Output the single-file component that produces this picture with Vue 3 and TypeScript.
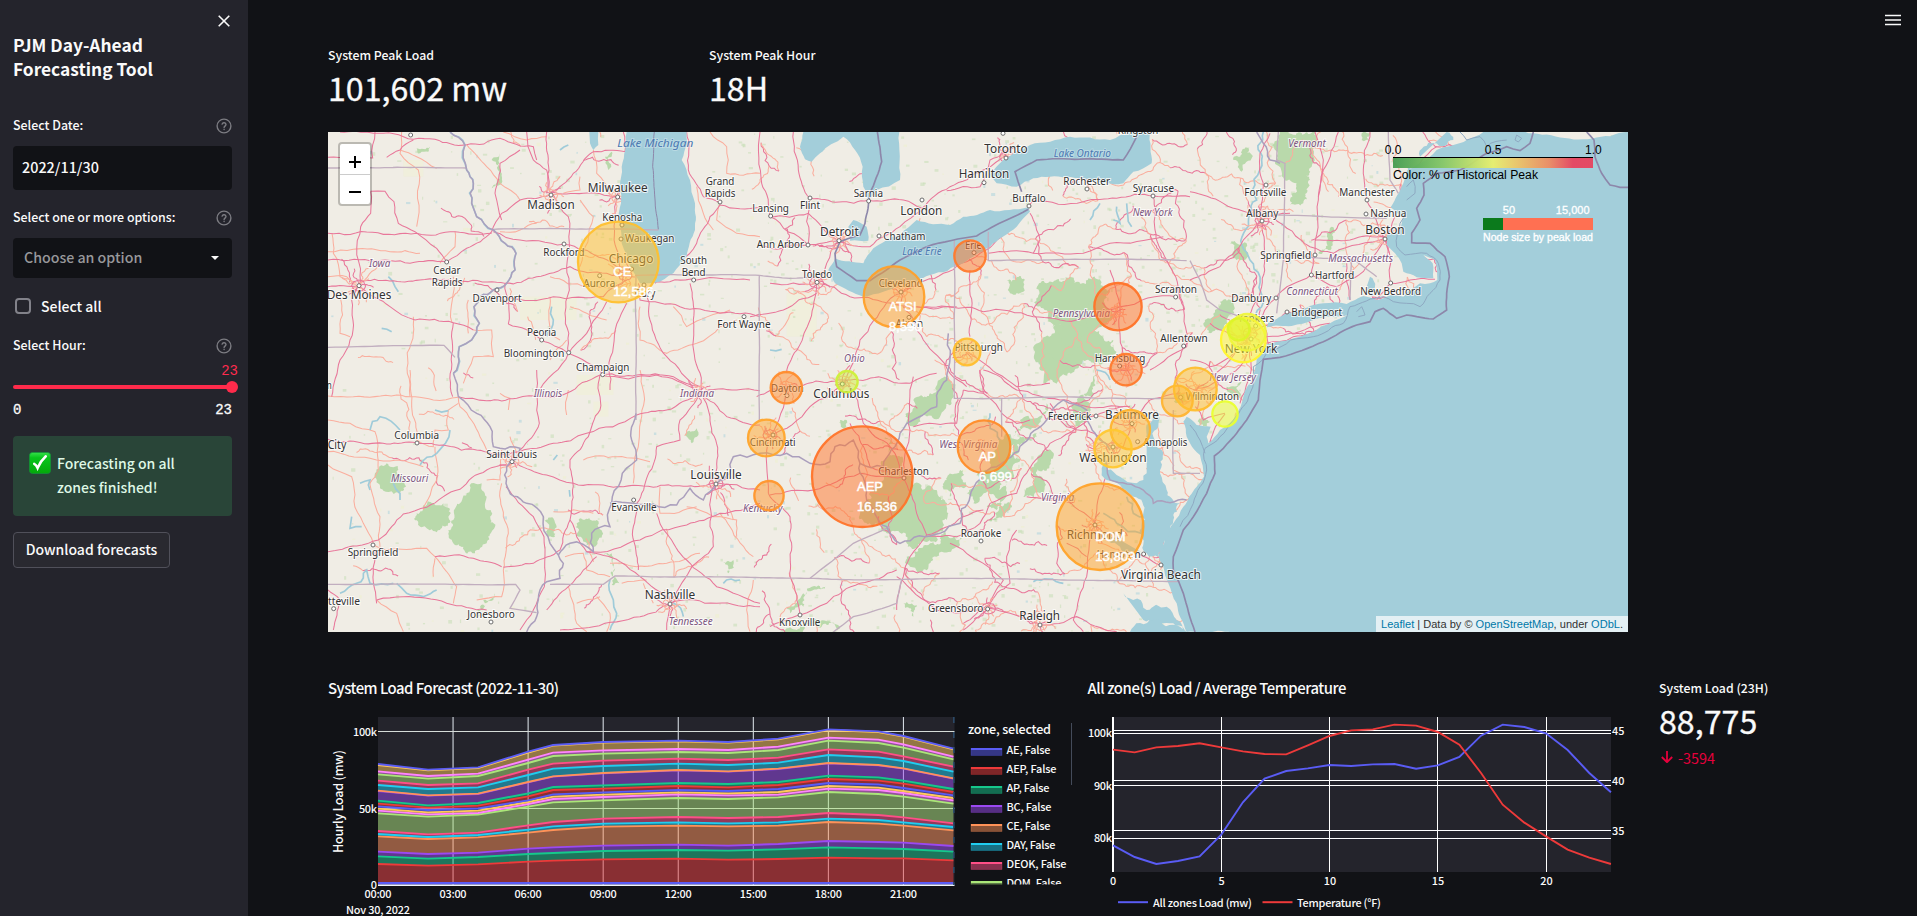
<script setup lang="ts">
type Pt = [number, number]
interface Label { t: string; x: number; y: number; w: number; k?: 'big' | 'state' | 'lake' }
interface Load { x: number; y: number; r: number; c: string; name?: string; value?: string; tx?: number; ty?: number }

const makeRandom = (seed: number) => () => {
  seed = (seed * 1664525 + 1013904223) % 4294967296
  return seed / 4294967296
}
const parse = (s: string, dx = 0, dy = 0): Pt[] =>
  s.trim().split(/\s+/).map((p) => {
    const [x, y] = p.split(',').map(Number)
    return [x + dx, y + dy] as Pt
  })

// Midpoint displacement gives hand-digitised lines a natural wander.
const rough = (pts: Pt[], amp: number, seed: number, min = 22): string => {
  const rnd = makeRandom(seed)
  const out: Pt[] = [pts[0]]
  const split = (a: Pt, b: Pt): void => {
    const d = Math.hypot(b[0] - a[0], b[1] - a[1])
    if (d > min) {
      const o = (rnd() - 0.5) * d * amp
      const m: Pt = [(a[0] + b[0]) / 2 - ((b[1] - a[1]) / d) * o, (a[1] + b[1]) / 2 + ((b[0] - a[0]) / d) * o]
      split(a, m)
      split(m, b)
    } else out.push(b)
  }
  for (let i = 1; i < pts.length; i++) split(pts[i - 1], pts[i])
  return 'M' + out.map((p) => `${p[0].toFixed(1)},${p[1].toFixed(1)}`).join(' ')
}
const lines = (list: string[], dx: number, dy: number, amp = 0.16) =>
  list.map((s, i) => rough(parse(s, dx, dy), amp, i * 97 + dx + dy + 5))

const motorways = [
  ...lines([
    '24,112 158,114 165,36', '60,36 160,40 280,58 345,58 440,74 540,55 640,80 650,120', '200,112 240,90 280,60',
    '152,214 152,280 122,320 122,490', '152,214 195,214 222,245 235,310 285,335',
    '24,340 290,340 405,335 515,340', '285,335 350,385 380,425', '24,420 150,422 270,430 380,425', '118,484 300,480 530,487 555,490 565,612',
    '118,495 95,540 90,660 60,720 35,830', '120,500 210,560 285,600 400,608 460,630', '400,608 398,830',
    '380,425 440,385 515,335 545,280 600,240 690,225', '690,222 680,150 640,120 620,36', '690,222 760,160 820,95 915,95 910,36',
    '690,215 790,220 890,232', '700,225 745,290 748,370 740,440 735,580 745,700', '890,232 885,290 895,400 930,450',
    '520,335 600,360 750,375 850,415 930,450', '555,490 650,470 750,440 860,460 930,470', '565,532 700,530 850,530 920,480',
    '565,612 665,660 745,700 850,762 950,765 1060,770 1140,800', '650,830 700,760 745,700 800,640 860,545',
    '955,490 960,540 1080,560 1200,580 1320,590', '870,810 880,680 920,550', '975,500 990,600 1040,710 1140,800',
    '1005,490 1080,430 1130,370 1170,290 1200,255 1320,262', '1110,490 1120,600 1125,720 1150,830', '1100,36 1105,150 1150,230 1200,248',
    '1000,486 1130,480 1290,480', '680,36 680,220', '24,500 118,497', '545,300 525,220 540,130 600,90',
  ], 0, 0),
  ...lines([
    '24,208 200,222 290,218 470,240 560,255 600,245', '24,545 110,528 175,510 215,470 250,432 320,412 420,358 500,300 560,285',
    '650,0 658,160 600,240', '600,245 700,220 800,190 950,135 1040,120 1140,65', '840,15 840,120 805,200 750,270 750,450',
    '590,280 680,315 760,340 880,352 1000,352 1180,340 1320,360', '558,350 640,440 672,500 673,650 640,720 600,780', '750,450 720,540 640,580 550,592',
    '750,450 800,545 900,575 960,620 1050,690', '800,545 960,510 1100,465 1200,430 1320,400', '1185,340 1170,470 1180,530 1110,600 1050,700 1040,780',
    '950,410 955,600', '1010,430 1040,490 1100,570 1190,650 1320,700', '1050,700 1190,700 1320,710', '1050,700 960,740 820,770 720,780', '345,560 460,565 545,590',
    '1140,65 1170,140 1190,330', '1140,65 1250,60 1320,62', '1140,65 1080,150 1080,210 1010,230 950,400', '1140,65 1220,140 1320,165', '24,660 60,690 40,780',
    '680,720 745,650 790,600 830,560', '165,540 160,610 170,700', '170,690 250,680 380,700 500,720', '415,80 500,92 590,85 740,70 840,15 1010,15 1130,60',
  ], 0, 750),
  ...lines([
    '30,36 35,190 60,290 175,375', '130,36 145,150 180,235 175,375', '180,235 355,240 460,240 516,265 600,200 700,150 770,100', '60,290 175,280 265,362',
    '24,375 175,375 265,362', '265,362 360,380 450,320 516,270', '265,362 230,430 200,490 180,600 110,760', '200,490 300,530 410,548 500,560 620,560',
    '410,548 470,510 580,460 690,400 760,345 835,265', '835,265 850,240 1000,245 1100,235 1210,228 1320,230', '590,212 690,200 720,120 800,80',
    '840,280 850,300 870,360 850,400', '715,400 850,400 1000,400 1080,370 1240,350', '460,560 520,660 600,760 650,800', '500,560 700,575 850,590 980,600 1110,560 1280,530',
    '660,450 660,650', '1210,228 1215,330 1250,420 1290,530', '1080,450 1110,560 1110,640 1128,749', '1290,530 1310,680 1200,750', '60,490 200,490',
    '650,690 740,760 800,800 900,790', '410,548 330,660 280,790', '0,590 100,570 200,520',
  ], 1290, 0),
  ...lines([
    '20,80 108,55 290,30 480,40 560,10', '290,30 180,110 60,200', '290,30 340,160 420,230 460,320', '108,55 60,200 55,370', '300,160 345,240 360,290 430,310',
    '60,375 190,360 330,310 460,320', '460,320 500,430 530,495 640,440 700,420', '460,320 480,180 490,20', '490,170 620,160 640,60', '640,60 700,70 800,160 840,150',
    '700,70 690,0', '530,495 480,560 460,620 440,720', '530,500 620,500 690,460 720,400 800,370 900,220 1020,140 1140,110', '600,520 700,580 760,630 715,715 640,780',
    '55,370 120,440 120,620 150,735', '150,735 230,700 330,640 440,600', '150,735 60,770', '440,620 560,720 715,715 780,730 870,765', '1141,179 1120,230 1089,236 1060,350 1035,465',
    '1035,465 1010,620 970,750 1000,785', '1035,465 1150,540 1230,585', '830,380 930,380 1040,465', '1141,150 1200,90 1290,70', '900,100 950,170 1010,180 1089,230',
    '800,480 770,560 780,640 640,760', '870,765 980,740 1100,785', '950,520 1010,560', '700,0 800,60 930,90 1120,110',
  ], 1290, 750),
  ...lines([
    '0,215 100,250 215,300 300,280', '215,300 215,500 175,600 180,660', '215,300 220,200 210,100 240,40', '215,300 160,360 90,440 0,480', '250,290 360,380 430,400 585,355',
    '375,36 400,120 385,240 375,405 363,465 257,535 180,640', '445,36 400,150 385,230', '585,355 530,240 520,150 540,36', '585,355 640,230 690,130 740,80',
    '585,355 600,410 602,490', '375,360 480,360 585,350', '363,465 440,500 540,430 585,360', '190,640 290,576 400,555 560,540 602,490', '602,490 660,480 735,478',
    '470,430 480,540', '228,650 300,640 420,610', '228,670 310,650 400,625', '175,660 120,720 60,780 16,807', '60,610 180,655', '16,807 90,780 150,740 180,670', '16,860 40,900 105,880',
    '0,720 60,740 175,665', '90,950 60,965 105,882', '180,690 175,780 150,850',
  ], 2610, 0),
]

const trunks = [
  ...lines([
    '245,36 240,100 295,150 290,320', '240,90 290,110 350,145', '36,340 40,400 60,470 110,490', '405,335 405,380 360,430', '24,395 100,388 210,395 300,400', '118,495 180,430', '440,74 500,140 540,190 600,240',
    '280,590 280,640 262,760 270,830', '400,470 396,608', '445,540 445,640', '460,630 515,630 520,710 460,710 430,790', '780,240 820,290 780,440', '690,530 690,640 720,660', '550,36 620,60 680,50',
    '1170,36 1220,80 1220,160 1320,160', '1200,250 1190,300 1250,340 1320,350', '960,560 960,660 1040,700 1130,670 1200,620 1250,600', '1130,200 1150,280 1180,330', '740,660 690,720', '650,310 600,330 540,335',
    '780,170 780,210 730,220', '1060,560 1100,620 1230,570', '60,530 60,640 90,650', '930,490 800,500 690,470', '820,90 830,160 870,225', '750,560 800,580 860,600', '24,470 80,470 100,495',
  ], 0, 0),
  ...lines([
    '24,78 100,80 230,75 340,90 415,82', '270,0 275,110 290,210', '24,150 90,160 165,185 175,300 150,340', '24,245 150,265 230,270 310,290', '24,285 95,320 130,460 160,520', '150,330 180,440 180,530',
    '160,525 200,540 320,535 345,560 410,650 400,700', '345,565 340,620', '415,82 420,110 480,200 500,240', '545,340 550,440 565,490 550,600 545,680 470,690', '290,210 340,230 345,180 385,180 385,120 415,100',
    '540,70 570,85 565,120', '745,60 740,135', '790,270 890,260 950,265 990,275', '700,425 820,430', '960,0 965,140 945,260 940,340', '735,560 790,550 800,600 870,620', '870,580 950,590 1040,580 1090,570 1140,550',
    '1100,410 1180,440 1250,450 1250,500', '1200,430 1230,470 1300,560', '745,650 770,760 800,785', '830,680 870,730 860,785', '770,700 840,680', '905,640 980,630', '1180,340 1240,450', '590,250 570,200', '545,240 540,330 500,330',
    '310,420 350,330 345,230', '1300,630 1280,720 1290,785', '170,690 230,730 250,785', '970,640 1000,700', '1020,350 1020,430 1130,410',
  ], 0, 750),
]

// Secondary road mesh; it thickens toward the seaboard and is covered by water layers.
const mesh: { d: string; pink: boolean }[] = []
{
  const rnd = makeRandom(2022)
  const step = 84
  const node = (i: number, j: number): Pt => {
    const r = makeRandom(i * 7919 + j * 104729 + 11)
    r()
    return [24 + (i + r() * 0.9) * step, 36 + (j + r() * 0.9) * step]
  }
  for (let i = 0; i < 40; i++) {
    for (let j = -1; j < 19; j++) {
      const a = node(i, j)
      const p = a[0] < 1300 ? 0.05 : a[0] < 1750 ? 0.26 : 0.46
      if (a[1] < 320 && a[0] > 1650 && a[0] < 2150) continue
      const next: Pt[] = [node(i + 1, j), node(i, j + 1), node(i + 1, j + 1)]
      next.forEach((b, n) => {
        if (rnd() < (n === 2 ? p * 0.45 : p)) mesh.push({ d: rough([a, b], 0.45, i * 31 + j * 17 + n, 11), pink: rnd() < 0.36 })
      })
    }
  }
}

// Short spokes and a ring in the urban areas.
const hubs: Pt[] = [[116, 497], [692, 225], [893, 230], [915, 465], [1140, 815], [576, 1025], [1188, 1092], [1050, 1452], [1557, 362], [1490, 488], [1742, 515], [1940, 700], [2060, 110], [1400, 800], [1570, 785], [1350, 945], [2325, 985], [2430, 910], [2380, 985], [2626, 810], [2770, 660], [2790, 640], [3195, 357], [2420, 750], [2006, 1465], [2160, 1515], [2325, 1215], [2826, 302], [2390, 575], [2520, 1310]]
const urban: string[] = hubs.flatMap(([x, y], h) => {
  const rnd = makeRandom(h * 131 + 3)
  const out: string[] = []
  for (let k = 0; k < 9; k++) {
    const a = (k / 9) * 6.28 + rnd() * 0.5
    const r = 22 + rnd() * 42
    out.push(rough([[x, y], [x + Math.cos(a) * r, y + Math.sin(a) * r]], 0.5, k + h, 9))
  }
  const ring: Pt[] = []
  for (let k = 0; k <= 8; k++) ring.push([x + Math.cos(k * 0.785) * 21, y + Math.sin(k * 0.785) * 17])
  out.push(rough(ring, 0.3, h, 9))
  return out
})

const forests = [
  '290,1180 340,1150 370,1150 385,1190 360,1230 320,1225', '400,1200 420,1150 450,1110 485,1090 500,1130 495,1160 525,1220 500,1270 465,1300 430,1280 400,1270 385,1230',
  '165,1060 200,1030 250,1070 235,1120 180,1100', '770,1210 830,1200 825,1280 800,1275', '670,1200 700,1195 705,1250 685,1250', '850,1305 875,1300 898,1390 875,1395',
  '2158,515 2370,512 2375,600 2330,680 2250,750 2160,750', '2060,480 2115,480 2110,515 2070,520',
  '1690,955 1720,965 1780,1095 1850,1110 1885,1180 1870,1230 1760,1270 1700,1240 1640,1140 1680,1090', '1780,840 1830,820 1890,780 1895,850 1860,890 1785,920',
  '1880,1080 1930,1050 1940,1100 1890,1130', '1940,1120 2010,1020 2100,950 2150,940 2080,1060 1960,1150', '2130,1050 2180,990 2200,1010 2150,1110', '2110,1130 2165,1070 2170,1120', '1760,1310 1830,1270 1930,1250 1850,1310 1770,1340',
  '1400,1460 1490,1400 1520,1400 1450,1460 1410,1480', '1380,1536 1450,1515 1560,1520 1550,1536', '1750,1450 1790,1455 1780,1490', '1210,1325 1240,1320 1225,1360',
  '2880,36 2985,36 2975,140 2950,250 2910,255 2930,190 2870,120', '2740,120 2790,80 2795,115 2765,155', '2730,370 2780,370 2775,420 2740,415', '3020,340 3035,320 3025,390 2995,400',
  '2650,610 2700,545 2740,550 2720,600 2660,640', '515,120 540,100 545,190 515,205', '855,110 875,95 865,150', '290,85 330,80 325,95 300,100', '1100,935 1130,925 1115,970', '2560,830 2610,800 2600,850', '2650,880 2670,905 2645,930', '2720,800 2765,785 2760,830', '3130,36 3150,36 3150,65 3125,60',
  '3870,36 3924,36 3924,130 3890,110', '2200,620 2300,560 2350,540 2240,680', '1560,900 1580,900 1575,925', '2260,870 2330,760 2310,860 2265,920', '490,1440 525,1420 520,1440 495,1450', '2070,1140 2030,1200 2000,1200',
  '2100,900 2180,850 2150,920 2070,1010', '2180,700 2290,650 2380,660 2300,720 2170,790', '1750,1100 1830,1120 1880,1200 1800,1260', '2000,1160 2060,1090 2030,1170', '500,1455 470,1500 480,1460',
].map((s, i) => rough([...parse(s), parse(s)[0]], 0.7, i * 41 + 7, 8) + 'Z')

const specks = (() => {
  const rnd = makeRandom(77)
  const out: { x: number; y: number; w: number; h: number; c: string }[] = []
  for (let i = 0; i < 1700; i++) {
    const x = 24 + Math.pow(rnd(), 0.7) * 3200
    const y = 36 + rnd() * 1500
    const k = rnd()
    out.push({ x, y, w: 3 + rnd() * 10, h: 3 + rnd() * 8, c: k < 0.78 ? '#c9e0b9' : k < 0.9 ? '#eef0cf' : '#b2d6dd' })
  }
  return out
})()

const water = [
  '920,36 905,140 900,200 903,250 895,300 905,370 930,440 960,490 1005,488 1060,460 1100,410 1125,330 1125,250 1110,180 1085,120 1102,70 1100,36',
  '808,36 835,36 835,75 820,90 810,70', '1450,36 1440,80 1455,118 1475,125 1500,100 1570,50 1605,90 1628,140 1630,200 1645,240 1670,210 1740,180 1738,36',
  '1600,300 1640,320 1645,362 1590,362 1585,320',
  '2125,262 2010,270 1930,290 1890,315 1790,300 1740,345 1660,385 1630,430 1545,415 1525,450 1545,490 1630,530 1690,515 1740,495 1830,465 1930,430 2010,380 2090,320 2130,275',
  '2010,165 2050,120 2130,75 2250,50 2370,60 2400,46 2440,36 2490,36 2495,130 2440,155 2410,190 2290,175 2190,170 2140,175 2090,200 2030,190',
].map((s, i) => rough(parse(s), 0.14, i * 13 + 3, 20) + 'Z')

const atlantic = rough(parse(`3924,36 3490,36 3440,60 3400,75 3350,90 3300,130 3262,150 3250,190 3232,225 3212,262 3250,290 3240,330 3200,345 3200,375 3225,400 3245,430 3250,455 3290,472
 3340,475 3338,430 3310,405 3345,420 3352,480 3330,490 3300,490 3250,530 3215,525 3170,540 3130,528 3080,552 3010,550 2910,578 2845,608 2840,622 2915,618 2980,600 3040,590 3085,585 3030,610 2980,635 2860,668 2825,680
 2810,720 2800,770 2770,830 2762,860 2740,900 2700,930 2665,970 2660,950 2672,920 2630,915 2600,890 2590,905 2600,950 2610,970 2640,1005 2652,1070 2630,1100 2590,1160 2560,1210 2530,1280 2515,1305
 2530,1340 2545,1390 2570,1450 2600,1536 3924,1536`), 0.12, 8, 18) + 'Z'
const bays = [
  '2480,975 2498,900 2510,870 2515,920 2500,950 2525,990 2520,1060 2540,1110 2580,1150 2560,1200 2530,1270 2515,1310 2480,1300 2465,1250 2470,1180 2440,1130 2400,1095 2360,1080 2345,1045 2350,1000 2360,1050 2400,1070 2450,1090 2480,1060',
  '2410,1420 2480,1470 2540,1460 2570,1500 2600,1536 2530,1510 2470,1500', '2430,1536 2500,1500 2580,1520 2600,1536', '2470,1300 2400,1280 2340,1230 2400,1260', '3150,470 3165,500 3155,530 3140,500', '3262,140 3290,160 3275,190',
  '3380,36 3400,60 3300,110',
].map((s, i) => rough(parse(s), 0.5, i * 5 + 1, 14) + 'Z')
const creeks = lines([
  '390,36 435,75 440,150 460,190 455,250 470,290 520,330 555,370 588,400 585,450 560,490 480,530 462,560 478,610 455,660 418,680 415,710 400,760', '205,470 225,500 235,515', '185,625 215,635', '720,90 745,75',
  '120,1090 150,1080 150,1110', '60,1420 110,1390 140,1350 150,1390 220,1390', '230,1390 260,1420 310,1430 350,1410', '95,1190 90,1225 125,1220', '700,1020 712,1005', '748,1110 750,1130', '2390,260 2400,310 2380,300', '2420,250 2435,320', '2340,250 2310,300',
  '220,1090 240,1120 240,1140', '1350,690 1385,688', '870,1380 880,1440 890,1480 870,1530', '345,870 385,872', '695,560 700,600 680,650', '2830,36 2825,120 2810,240 2790,420 2785,640', '2010,880 2040,960', '2370,780 2330,750', '150,930 180,890 240,930', '1060,1450 1090,1490', '1210,1390 1260,1380',
  '2480,1190 2440,1180 2420,1130', '2465,1240 2390,1210 2350,1180', '2140,1385 2230,1390', '390,930 350,1000 300,1035',
], 0, 0, 0.4)

const borders = lines([
  '24,144 440,144', '24,682 372,676 405,712', '520,328 1015,330', '945,466 1318,466 1410,475 1490,470', '948,466 948,900', '1318,466 1318,900', '24,1393 587,1393 600,1410 570,1465 650,1478', '690,1393 850,1393 885,1368 1320,1373 1750,1378 2580,1385',
  '1903,360 1903,835 2580,835', '2005,335 2005,422 2600,422', '2045,835 2045,950', '2610,422 2640,480 2660,540 2700,570 2790,600', '2870,580 2890,420 2895,130 2870,120 2875,36', '2870,285 3200,295', '2870,400 3010,415 3095,415 3170,470', '3095,415 3090,540', '3205,36 3210,180 3235,220', '2560,870 2560,1060 2640,1060',
  '1470,1375 1600,1270 1710,1220', '1745,1378 1730,1450 1640,1480 1600,1490 1540,1536',
], 0, 0, 0.02)
const riverBorders = lines([
  '390,36 435,75 440,150 460,190 455,250 470,290 520,330 555,370 588,400 585,450 560,490 480,530 462,560 478,610 455,660 418,680 415,710 400,760',
  '400,760 415,830 470,880 510,920 520,980 540,985 600,985 560,1040 558,1090 620,1150 670,1190 690,1270 715,1305 730,1330 720,1375 680,1385 655,1440 650,1490 620,1536',
  '715,1305 750,1270 820,1295 815,1240 870,1220 875,1150 950,1020 935,960 940,910 948,880', '870,1150 940,1150 1000,1152 1070,1155 1110,1105 1150,1140 1190,1090 1230,1060 1240,1010 1320,1000 1400,1000 1470,1030 1530,1025 1545,980 1600,960 1620,1030 1690,1040 1740,940 1850,860 1880,780 1885,640',
  '1620,1030 1640,1140 1700,1220 1740,1270 1860,1240 1920,1210 1950,1130 2030,1040 2110,970 2180,900 2230,840', '2230,840 2300,870 2340,960 2370,990', '2350,1000 2370,1080 2470,1110 2500,1150 2600,1140', '2810,36 2830,70 2850,120 2880,130',
], 0, 0, 0.3)
const maritime = lines([
  '1672,36 1685,125 1650,220 1635,310 1620,345 1560,365 1545,400 1550,440 1610,482 1650,482 1740,420 1820,380 1970,348 2060,300 2125,268', '2105,215 2085,155 2150,120 2410,120 2450,50',
  '3640,36 3630,70 3600,92 3560,80 3500,100 3420,150 3350,160 3310,190 3312,225 3290,265 3300,300 3275,340 3275,368 3330,370 3375,410 3388,470 3380,520 3380,570 3340,597 3290,590 3260,585 3230,595 3190,565 3165,575 3150,605 3110,615 3010,665 2880,712 2830,718 2820,780 2815,840 2780,900 2750,940 2710,985 2683,1008 2685,1060 2660,1120 2620,1190 2590,1230 2560,1310 2560,1350 2590,1420 2625,1536',
  '3800,36 3822,60 3825,110 3845,160 3870,195 3900,202 3924,202', '1003,36 998,140 1015,328',
], 0, 0, 0.05)
const offshore = lines([
  '3255,280 3240,310 3230,380 3255,405 3320,400 3355,430 3360,480 3330,520 3300,560 3260,550 3220,545 3190,530 3090,560 3070,610 2980,650 2850,690 2800,740 2790,820 2740,900 2700,950 2655,985 2660,1050 2620,1150 2580,1220', '2610,915 2640,960 2655,1000', '3420,36 3440,60 3480,50 3500,80 3560,60', '3260,200 3280,180 3285,220 3260,240', '3110,575 3125,560 3135,585 3115,590', '3585,60 3590,45 3605,55 3595,66 3585,60',
], 0, 0, 0.2)

const labels: Label[] = [
  { t: 'Lake Michigan', x: 1006, y: 80, w: 228, k: 'lake' }, { t: 'Milwaukee', x: 893, y: 215, w: 180, k: 'big' }, { t: 'Madison', x: 693, y: 266, w: 142, k: 'big' }, { t: 'Kenosha', x: 907, y: 303, w: 120 }, { t: 'Waukegan', x: 989, y: 367, w: 148 }, { t: 'Rockford', x: 732, y: 407, w: 124 },
  { t: 'Chicago', x: 933, y: 430, w: 134, k: 'big' }, { t: 'Aurora', x: 838, y: 500, w: 96 }, { t: 'Gary', x: 975, y: 531, w: 62 }, { t: 'South', x: 1121, y: 433, w: 80 }, { t: 'Bend', x: 1121, y: 468, w: 72 }, { t: 'Grand', x: 1200, y: 196, w: 86 }, { t: 'Rapids', x: 1200, y: 232, w: 92 }, { t: 'Fort Wayne', x: 1272, y: 625, w: 160 },
  { t: 'Iowa', x: 179, y: 440, w: 64, k: 'state' }, { t: 'Cedar', x: 381, y: 462, w: 82 }, { t: 'Rapids', x: 381, y: 498, w: 92 }, { t: 'Des Moines', x: 117, y: 538, w: 194, k: 'big' }, { t: 'Davenport', x: 531, y: 545, w: 147 }, { t: 'Peoria', x: 665, y: 648, w: 88 }, { t: 'Bloomington', x: 642, y: 710, w: 182 }, { t: 'Champaign', x: 848, y: 752, w: 160 },
  { t: 'Illinois', x: 684, y: 832, w: 86, k: 'state' }, { t: 'Indiana', x: 1131, y: 832, w: 102, k: 'state' }, { t: 'Columbia', x: 290, y: 958, w: 134 }, { t: 'City', x: 51, y: 987, w: 56, k: 'big' }, { t: 'Saint Louis', x: 575, y: 1014, w: 152 }, { t: 'Missouri', x: 269, y: 1087, w: 112, k: 'state' }, { t: 'Springfield', x: 159, y: 1309, w: 152 }, { t: 'tteville', x: 72, y: 1455, w: 96 }, { t: 'Jonesboro', x: 513, y: 1495, w: 142 },
  { t: 'Evansville', x: 942, y: 1173, w: 136 }, { t: 'Louisville', x: 1188, y: 1077, w: 154, k: 'big' }, { t: 'Nashville', x: 1050, y: 1436, w: 152, k: 'big' }, { t: 'Tennessee', x: 1112, y: 1516, w: 132, k: 'state' }, { t: 'Kentucky', x: 1328, y: 1175, w: 118, k: 'state' }, { t: 'n', x: 28, y: 808, w: 15 },
  { t: 'Kingston', x: 2454, y: 42, w: 122 }, { t: 'Toronto', x: 2058, y: 100, w: 130, k: 'big' }, { t: 'Lake Ontario', x: 2287, y: 112, w: 172, k: 'lake' }, { t: 'Hamilton', x: 1992, y: 175, w: 152, k: 'big' }, { t: 'Rochester', x: 2300, y: 196, w: 140 }, { t: 'Syracuse', x: 2500, y: 216, w: 124 }, { t: 'Buffalo', x: 2127, y: 247, w: 100 }, { t: 'New York', x: 2498, y: 288, w: 120, k: 'state' },
  { t: 'Sarnia', x: 1645, y: 230, w: 88 }, { t: 'London', x: 1804, y: 284, w: 126, k: 'big' }, { t: 'Lansing', x: 1352, y: 276, w: 110 }, { t: 'Flint', x: 1470, y: 268, w: 60 }, { t: 'Detroit', x: 1558, y: 347, w: 116, k: 'big' }, { t: 'Chatham', x: 1753, y: 359, w: 126 }, { t: 'Ann Arbor', x: 1381, y: 385, w: 142 }, { t: 'Lake Erie', x: 1806, y: 406, w: 118, k: 'lake' }, { t: 'Erie', x: 1960, y: 387, w: 50 }, { t: 'Toledo', x: 1491, y: 474, w: 90 },
  { t: 'Cleveland', x: 1742, y: 502, w: 132 }, { t: 'Akron', x: 1768, y: 622, w: 82 }, { t: 'Pennsylvania', x: 2284, y: 592, w: 172, k: 'state' }, { t: 'Pittsburgh', x: 1976, y: 694, w: 144 }, { t: 'Harrisburg', x: 2400, y: 725, w: 152 }, { t: 'Ohio', x: 1603, y: 726, w: 62, k: 'state' }, { t: 'Scranton', x: 2568, y: 519, w: 126 }, { t: 'Allentown', x: 2592, y: 665, w: 142 },
  { t: 'Dayton', x: 1402, y: 816, w: 98 }, { t: 'Columbus', x: 1564, y: 834, w: 168, k: 'big' }, { t: 'Cincinnati', x: 1358, y: 979, w: 138 }, { t: 'Charleston', x: 1751, y: 1064, w: 152 }, { t: 'West Virginia', x: 1945, y: 983, w: 174, k: 'state' }, { t: 'Frederick', x: 2249, y: 900, w: 130 }, { t: 'Baltimore', x: 2436, y: 896, w: 162, k: 'big' }, { t: 'Annapolis', x: 2536, y: 977, w: 132 }, { t: 'Washington', x: 2379, y: 1026, w: 202, k: 'big' },
  { t: 'Virginia', x: 2213, y: 1144, w: 100, k: 'state' }, { t: 'Richmond', x: 2324, y: 1257, w: 168, k: 'big' }, { t: 'Hampton', x: 2396, y: 1314, w: 132 }, { t: 'Virginia Beach', x: 2523, y: 1377, w: 240, k: 'big' }, { t: 'Roanoke', x: 1983, y: 1250, w: 122 }, { t: 'Greensboro', x: 1907, y: 1477, w: 166 }, { t: 'Raleigh', x: 2159, y: 1501, w: 122, k: 'big' }, { t: 'Knoxville', x: 1439, y: 1518, w: 124 },
  { t: 'Vermont', x: 2961, y: 82, w: 112, k: 'state' }, { t: 'Fortsville', x: 2836, y: 227, w: 126 }, { t: 'Manchester', x: 3141, y: 227, w: 166 }, { t: 'Albany', x: 2827, y: 292, w: 96 }, { t: 'Nashua', x: 3205, y: 292, w: 108 }, { t: 'Boston', x: 3195, y: 342, w: 118, k: 'big' }, { t: 'Springfield', x: 2897, y: 416, w: 152 }, { t: 'Massachusetts', x: 3122, y: 425, w: 194, k: 'state' },
  { t: 'Hartford', x: 3044, y: 477, w: 118 }, { t: 'New Bedford', x: 3212, y: 524, w: 182 }, { t: 'Connecticut', x: 2976, y: 525, w: 154, k: 'state' }, { t: 'Danbury', x: 2794, y: 545, w: 120 }, { t: 'Bridgeport', x: 2990, y: 587, w: 152 }, { t: 'Yonkers', x: 2808, y: 605, w: 110 }, { t: 'New York', x: 2793, y: 698, w: 158, k: 'big' }, { t: 'New Jersey', x: 2738, y: 782, w: 140, k: 'state' }, { t: 'Wilmington', x: 2677, y: 841, w: 160 },
]
const towns = parse('272,45 693,225 893,231 906,315 903,357 732,372 117,497 380,426 531,510 665,660 746,698 848,764 839,467 935,447 972,495 1121,480 1200,246 1272,590 291,969 576,1025 159,1275 41,1466 513,1506 941,1140 1188,1092 1050,1452 2049,40 2058,114 1992,188 2301,207 2499,228 2127,258 1646,243 1806,240 1352,288 1470,234 1557,362 1677,348 1464,375 1491,487 1962,398 1743,516 1767,592 2567,531 2591,678 2399,738 2325,1215 2471,1302 2523,1335 1983,1263 2003,1467 2160,1515 1440,1485 1752,1074 1401,827 1359,945 1567,792 2328,888 2436,911 2453,965 2379,981 2838,195 3141,240 2826,303 3138,282 3195,357 2985,405 2974,465 3212,489 2868,534 2901,576 2807,618 2793,657 2582,832')

const loads: Load[] = [
  { x: 895, y: 426, r: 121, c: '#ffc02e', name: 'CE', value: '12,586', tx: 880, ty: 467 }, { x: 1627, y: 1070, r: 151, c: '#ff742a', name: 'AEP', value: '16,536', tx: 1611, ty: 1112 },
  { x: 1992, y: 980, r: 79, c: '#ff8c28', name: 'AP', value: '6,699', tx: 1976, ty: 1023 }, { x: 2340, y: 1220, r: 130, c: '#ffa32a', name: 'DOM', value: '13,803', tx: 2326, ty: 1263 }, { x: 1722, y: 530, r: 91, c: '#ffa02a', name: 'ATSI', value: '8,590', tx: 1706, ty: 573 },
  { x: 1950, y: 408, r: 47, c: '#ff7a2c' }, { x: 2394, y: 560, r: 71, c: '#ff7328' }, { x: 1941, y: 696, r: 40, c: '#ffbe2e' }, { x: 2418, y: 749, r: 47, c: '#ff7a2c' }, { x: 1399, y: 803, r: 47, c: '#ff8c2c' }, { x: 1581, y: 785, r: 32, c: '#cdf03a' }, { x: 1339, y: 954, r: 55, c: '#ffa52c' }, { x: 1347, y: 1127, r: 44, c: '#ff962c' },
  { x: 2431, y: 929, r: 59, c: '#ffb42e' }, { x: 2379, y: 986, r: 56, c: '#ffc832' }, { x: 2572, y: 843, r: 46, c: '#ffb432' }, { x: 2626, y: 807, r: 64, c: '#ffbe2e' }, { x: 2715, y: 882, r: 38, c: '#eaff30' }, { x: 2770, y: 660, r: 67, c: '#fff52c' }, { x: 2782, y: 637, r: 55, c: '#eef53c' }, { x: 2756, y: 628, r: 33, c: '#dcf42a' },
]

const help = 'M6.1 6.1a2 2 0 0 1 3.9.5c0 1.3-1.9 1.7-1.9 2.8M8.1 11.2v.3'

// Stacked zones: cumulative edge heights sampled on key hours.
const keyHours = [0, 2, 4, 6, 7, 9, 12, 14, 16, 18, 20, 21, 23]
const palette = { blue: '#5a5cf5', red: '#ee3a3a', green: '#16c88c', purple: '#9b49f2', orange: '#ff9258', cyan: '#20cdf0', rose: '#ff4f87', lime: '#abe679', pink: '#ff84ff', gold: '#ffc85c' }
const edges: [keyof typeof palette, number[]][] = [
  ['blue', keyHours.map(() => 639)], ['red', [582, 587, 583, 575, 572, 568, 566, 569, 567, 563, 565, 565, 571]], ['green', [559, 566, 561, 552, 549, 543, 540, 542, 538, 532, 535, 537, 545]],
  ['purple', [545, 552, 548, 536, 532, 527, 524, 527, 522, 513, 516, 518, 528]], ['orange', [499, 507, 502, 488, 480, 470, 467, 469, 467, 456, 461, 467, 481]], ['cyan', [492, 501, 495, 479, 469, 461, 457, 460, 457, 446, 450, 457, 471]],
  ['rose', [483, 493, 488, 466, 456, 446, 441, 444, 441, 429, 435, 442, 460]], ['lime', [430, 440, 434, 410, 397, 391, 384, 387, 382, 366, 372, 380, 401]], ['pink', [422, 433, 429, 402, 387, 381, 373, 376, 374, 356, 360, 369, 391]],
  ['gold', [416, 427, 422, 396, 380, 374, 367, 370, 366, 348, 353, 363, 384]], ['blue', [409, 420, 415, 391, 373, 367, 360, 363, 357, 339, 343, 354, 376]], ['red', [401, 413, 407, 379, 360, 356, 348, 352, 345, 327, 332, 341, 366]], ['green', [392, 406, 399, 370, 351, 346, 339, 342, 336, 317, 322, 332, 357]],
  ['purple', [363, 377, 372, 337, 320, 310, 301, 305, 297, 280, 286, 296, 326]], ['orange', [362, 376, 371, 336, 319, 309, 300, 304, 296, 279, 285, 295, 325]], ['cyan', [345, 357, 352, 315, 296, 288, 281, 285, 278, 255, 262, 273, 305]], ['rose', [332, 345, 340, 299, 281, 272, 266, 270, 263, 238, 245, 259, 290]],
  ['lime', [313, 326, 318, 279, 258, 251, 246, 249, 240, 212, 219, 233, 268]], ['pink', [304, 318, 311, 269, 248, 241, 237, 240, 230, 203, 209, 223, 260]], ['gold', [285, 301, 294, 248, 227, 218, 214, 218, 208, 180, 186, 200, 238]], ['blue', [282, 299, 292, 245, 225, 216, 212, 216, 206, 178, 184, 198, 236]],
]
const edgePoints = (v: number[]) => v.map((y, i): Pt => [50 + keyHours[i] * 25.02, y / 3 + 1])
const toStr = (p: Pt[]) => p.map((q) => `${q[0].toFixed(2)},${q[1].toFixed(2)}`).join(' ')
const areas = edges.map(([c, v], i) => {
  const below = i ? edgePoints(edges[i - 1][1]) : edgePoints(keyHours.map(() => 645))
  return { c: palette[c], line: toStr(edgePoints(v)), fill: toStr([...edgePoints(v), ...below.reverse()]) }
})
const hourTicks = [0, 3, 6, 9, 12, 15, 18, 21]
const zones: [string, string, number][] = [
  ['AE', palette.blue, 44], ['AEP', palette.red, 50], ['AP', palette.green, 43], ['BC', palette.purple, 45], ['CE', palette.orange, 44], ['DAY', palette.cyan, 49], ['DEOK', palette.rose, 60], ['DOM', palette.lime, 55],
]

const hourly = (v: number[]) => toStr(v.map((y, i): Pt => [26 + i * 21.65, y / 3 + 1]))
const loadLine = hourly([526, 561, 582, 573, 559, 494, 397, 326, 303, 295, 285, 288, 283, 282, 296, 286, 261, 197, 164, 171, 190, 240, 309, 367])
const tempLine = hourly([239, 247, 232, 228, 220, 232, 244, 252, 253, 226, 198, 181, 178, 164, 167, 186, 224, 309, 404, 458, 499, 539, 563, 582])
</script>

<template>
  <div class="app">
    <aside class="sidebar">
      <svg class="close" width="12" height="12" viewBox="0 0 12 12"><path d="M.7.7l10.600 10.600M11.300.7L.7 11.300" /></svg>
      <h1>PJM Day-Ahead<br />Forecasting Tool</h1>
      <div class="field-label date"><span>Select Date:</span><svg class="help" viewBox="0 0 16 16"><circle cx="8" cy="8" r="6.9" /><path :d="help" /></svg></div>
      <div class="input">2022/11/30</div>
      <div class="field-label options"><span>Select one or more options:</span><svg class="help" viewBox="0 0 16 16"><circle cx="8" cy="8" r="6.9" /><path :d="help" /></svg></div>
      <div class="select"><span>Choose an option</span><i class="caret"></i></div>
      <div class="check"><i class="box"></i><span>Select all</span></div>
      <div class="field-label hour"><span>Select Hour:</span><svg class="help" viewBox="0 0 16 16"><circle cx="8" cy="8" r="6.9" /><path :d="help" /></svg></div>
      <div class="slider-value">23</div>
      <div class="track"><i class="thumb"></i></div>
      <div class="slider-range"><span>0</span><span>23</span></div>
      <div class="alert">
        <svg width="22" height="22" viewBox="0 0 22 22"><defs><linearGradient id="tick" x1="0" y1="0" x2="0" y2="1"><stop offset="0" stop-color="#35e04a" /><stop offset=".25" stop-color="#08c51c" /><stop offset="1" stop-color="#04a80a" /></linearGradient></defs><rect x=".5" y=".5" width="21" height="21" rx="3" fill="url(#tick)" stroke="#13933a" stroke-width=".7" /><path d="M5.2 11.8c1.3.6 2.5 2.100 3.400 4.200C10.500 11.500 13 7.700 16.800 4.300" fill="none" stroke="#fff" stroke-width="2.500" stroke-linecap="round" /></svg>
        <p>Forecasting on all<br />zones finished!</p>
      </div>
      <button class="download">Download forecasts</button>
    </aside>

    <main class="main">
      <svg class="menu" width="16" height="12" viewBox="0 0 16 12"><path d="M0 1.500h16M0 6h16M0 10.500h16" /></svg>
      <section class="metrics">
        <div class="metric"><div class="m-label">System Peak Load</div><div class="m-value">101,602 mw</div></div>
        <div class="metric"><div class="m-label">System Peak Hour</div><div class="m-value">18H</div></div>
      </section>

      <div class="map">
        <svg class="tiles" viewBox="24 36 3900 1500" width="1300" height="500">
          <rect x="24" y="36" width="3900" height="1500" fill="#f0ede5" />
          <g fill="#f0f1d5" opacity=".55"><rect x="770" y="765" width="110" height="60" /><rect x="600" y="530" width="170" height="70" /><rect x="1400" y="520" width="90" height="130" /><rect x="820" y="845" width="45" height="45" /><rect x="250" y="120" width="60" height="50" /></g>
          <rect v-for="(s, i) in specks" :key="'s' + i" :x="s.x" :y="s.y" :width="s.w" :height="s.h" :fill="s.c" opacity=".6" />
          <path v-for="(d, i) in forests" :key="'f' + i" :d="d" fill="#b9d9ab" />
          <path v-for="(m, i) in mesh" :key="'m' + i" :d="m.d" class="road" :class="m.pink ? 'pink' : 'peach'" />
          <path v-for="(d, i) in trunks" :key="'t' + i" :d="d" class="road peach" />
          <path v-for="(d, i) in creeks" :key="'c' + i" :d="d" class="creek" />
          <path v-for="(d, i) in motorways" :key="'r' + i" :d="d" class="road pink" />
          <path v-for="(d, i) in urban" :key="'u' + i" :d="d" class="road" :class="i % 3 ? 'peach' : 'pink'" />
          <path v-for="(d, i) in water" :key="'w' + i" :d="d" fill="#a3ceda" />
          <path :d="atlantic" fill="#a3ceda" />
          <path v-for="(d, i) in bays" :key="'b' + i" :d="d" fill="#a3ceda" />
          <path v-for="(d, i) in borders" :key="'bo' + i" :d="d" class="border" />
          <path v-for="(d, i) in riverBorders" :key="'rb' + i" :d="d" class="river" />
          <path v-for="(d, i) in offshore" :key="'o' + i" :d="d" class="offshore" />
          <path v-for="(d, i) in maritime" :key="'ma' + i" :d="d" class="maritime" :class="{ slim: i === maritime.length - 1 }" />
          <g fill="#fff" stroke="#6d6d6d" stroke-width="3"><circle v-for="(p, i) in towns" :key="'p' + i" :cx="p[0]" :cy="p[1]" r="6" /></g>
          <text v-for="(l, i) in labels" :key="'l' + i" :x="l.x" :y="l.y" :textLength="l.w" lengthAdjust="spacingAndGlyphs" text-anchor="middle" class="place" :class="l.k">{{ l.t }}</text>
          <g v-for="(c, i) in loads" :key="'z' + i"><circle :cx="c.x" :cy="c.y" :r="c.r" :fill="c.c" fill-opacity=".5" :stroke="c.c" stroke-width="7" stroke-opacity=".95" /></g>
          <g v-for="(c, i) in loads.slice(0, 5)" :key="'zt' + i" class="zone"><text :x="c.tx" :y="c.ty">{{ c.name }}</text><text :x="c.tx" :y="(c.ty ?? 0) + 60" :textLength="c.name === 'AP' || c.name === 'ATSI' ? 100 : 120" lengthAdjust="spacingAndGlyphs">{{ c.value }}</text></g>

          <defs><linearGradient id="heat"><stop offset="0" stop-color="#3f9a4d" /><stop offset=".25" stop-color="#86c763" /><stop offset=".5" stop-color="#eaf06a" /><stop offset=".62" stop-color="#eec565" /><stop offset=".78" stop-color="#ee8a60" /><stop offset=".9" stop-color="#e8405c" /><stop offset="1" stop-color="#e8405c" /></linearGradient></defs>
          <rect x="3219" y="113" width="600" height="31" fill="url(#heat)" opacity=".93" />
          <path d="M3219 112.500h600" stroke="#000" stroke-width="3" />
          <g class="scale"><text x="3219" y="102" text-anchor="middle">0.0</text><text x="3519" y="102" text-anchor="middle">0.5</text><text x="3820" y="102" text-anchor="middle">1.0</text><text x="3219" y="177" textLength="435" lengthAdjust="spacingAndGlyphs">Color: % of Historical Peak</text></g>
          <rect x="3489" y="294" width="60" height="36" fill="#0b7a1c" /><rect x="3549" y="294" width="270" height="36" fill="#ff7052" />
          <g class="sizes"><text x="3567" y="282" text-anchor="middle" textLength="37">50</text><text x="3758" y="282" text-anchor="middle" textLength="101">15,000</text><text x="3489" y="363" textLength="330" lengthAdjust="spacingAndGlyphs" class="cap">Node size by peak load</text></g>
        </svg>
        <div class="zoom"><span><svg width="14" height="14" viewBox="0 0 14 14"><path d="M1 7h12M7 1v12" /></svg></span><span><svg width="14" height="14" viewBox="0 0 14 14"><path d="M1 7h12" /></svg></span></div>
        <div class="credit"><a>Leaflet</a> | Data by © <a>OpenStreetMap</a>, under <a>ODbL</a>.</div>
      </div>

      <section class="bottom">
        <svg class="chart" width="759" height="247" viewBox="0 0 759 247">
          <defs><clipPath id="zones"><rect x="630" y="40" width="120" height="175.500" /></clipPath></defs>
          <text x="0" y="24.500" class="title" textLength="231">System Load Forecast (2022-11-30)</text>
          <rect x="50" y="48" width="576.500" height="168" fill="#24242c" />
          <path v-for="h in hourTicks.slice(1)" :key="h" :d="`M${50 + h * 25.02} 48v168`" stroke="#e4ebf2" />
          <path d="M50 62.500h576.500M50 139.500h576.500" stroke="#d5dcd8" />
          <g v-for="(a, i) in areas" :key="i"><polygon :points="a.fill" :fill="a.c" fill-opacity=".5" /></g>
          <polyline v-for="(a, i) in areas" :key="'l' + i" :points="a.line" fill="none" :stroke="a.c" stroke-width="1.900" />
          <path d="M50 216.200h576.500" stroke="#f0f3fa" stroke-width="1.500" />
          <path d="M625.800 48v168" stroke="#2b4a68" stroke-width="1.600" stroke-dasharray="6 9" />
          <g class="tick"><text x="49" y="67" text-anchor="end" textLength="24">100k</text><text x="49" y="143.500" text-anchor="end" textLength="18">50k</text><text x="49" y="220" text-anchor="end">0</text>
            <text v-for="h in hourTicks" :key="'h' + h" :x="50 + h * 25.02" y="228.700" text-anchor="middle" textLength="27">{{ String(h).padStart(2, '0') }}:00</text><text x="18" y="245" textLength="64">Nov 30, 2022</text></g>
          <text class="axis" transform="translate(15 184) rotate(-90)" textLength="103">Hourly Load (mw)</text>
          <text x="640" y="65" class="legend-title" textLength="83">zone, selected</text>
          <g clip-path="url(#zones)"><g v-for="(z, i) in zones" :key="z[0]" :transform="`translate(643 ${80 + i * 19})`"><rect x="0" y="-.5" width="31" height="7" :fill="z[1]" fill-opacity=".5" :stroke="z[1]" stroke-opacity=".45" stroke-width=".6" /><path d="M0 0h31" :stroke="z[1]" stroke-width="2" /><text x="35.500" y="4.500" class="tick" :textLength="z[2]">{{ z[0] }}, False</text></g></g>
          <path d="M743.500 54v62" stroke="#444b5a" />
        </svg>

        <svg class="chart second" width="572" height="247" viewBox="0 0 572 247">
          <text x=".5" y="24.500" class="title" textLength="259">All zone(s) Load / Average Temperature</text>
          <rect x="26" y="48" width="498" height="155" fill="#24242c" />
          <path d="M134.500 48v155M242.500 48v155M350.500 48v155M459.500 48v155M26 64.500h498M26 116.500h498M26 169.500h498M26 61.500h498M26 111.500h498M26 161.500h498" stroke="#fff" />
          <path d="M26 48v155" stroke="#fff" stroke-width="2" />
          <polyline :points="loadLine" fill="none" stroke="#5a5cf5" stroke-width="1.900" /><polyline :points="tempLine" fill="none" stroke="#ee3a3a" stroke-width="1.900" />
          <g class="tick"><text x="25" y="68" text-anchor="end" textLength="24">100k</text><text x="25" y="120.500" text-anchor="end" textLength="18">90k</text><text x="25" y="173" text-anchor="end" textLength="18">80k</text>
            <text x="26" y="216" text-anchor="middle">0</text><text x="134.500" y="216" text-anchor="middle">5</text><text x="243" y="216" text-anchor="middle">10</text><text x="351" y="216" text-anchor="middle">15</text><text x="459.500" y="216" text-anchor="middle">20</text>
            <text x="525" y="66">45</text><text x="525" y="116">40</text><text x="525" y="166">35</text>
            <text x="66" y="238" textLength="99">All zones Load (mw)</text><text x="210" y="238" textLength="84">Temperature (°F)</text></g>
          <path d="M31 233.200h30" stroke="#5a5cf5" stroke-width="2" /><path d="M175.500 233.200h30" stroke="#ee3a3a" stroke-width="2" />
        </svg>

        <div class="metric current">
          <div class="m-label">System Load (23H)</div><div class="m-value">88,775</div>
          <div class="delta"><svg width="12" height="12" viewBox="0 0 12 12"><path d="M6 0v11M.8 6L6 11.200 11.200 6" /></svg>-3594</div>
        </div>
      </section>
    </main>
  </div>
</template>

<style>
body { margin: 0; background: #111216; overflow: hidden; }
</style>
<style scoped>
.app { display: flex; width: 100vw; height: 100vh; overflow: hidden; background: #111216; color: #fafafa; font-family: "Noto Sans CJK SC", "Noto Sans", sans-serif; font-size: 14px; font-weight: 500; }
.sidebar { position: relative; flex: 0 0 248px; box-sizing: border-box; padding: 33px 16px 0 13px; background: #24242c; display: flex; flex-direction: column; }
.close { position: absolute; left: 218px; top: 15px; stroke: #fafafa; stroke-width: 1.6; }
h1 { margin: 0; font-size: 17.35px; line-height: 24px; font-weight: 700; white-space: nowrap; }
.field-label { display: flex; align-items: center; justify-content: space-between; height: 20px; font-size: 12.4px; white-space: nowrap; }
.field-label span { line-height: 18px; margin-bottom: 2px; }
.help { width: 16px; height: 16px; fill: none; stroke: #7c7c82; stroke-width: 1.4; stroke-linecap: round; }
.date { margin-top: 35px; }
.input { box-sizing: border-box; margin-top: 10px; height: 44px; line-height: 42px; padding-left: 9px; border-radius: 4px; background: #111216; font-size: 14.4px; }
.options { margin-top: 18px; }
.select { box-sizing: border-box; margin-top: 10px; height: 40px; padding: 0 13px 0 11px; border-radius: 4px; background: #111216; color: #98989b; display: flex; align-items: center; justify-content: space-between; font-size: 14.2px; }
.select span { margin-bottom: 2px; }
.caret { border: 4px solid transparent; border-top-color: #fafafa; border-bottom: 0; }
.check { margin: 19px 0 0 2px; height: 20px; display: flex; align-items: center; gap: 10px; }
.check span { margin-bottom: 2px; }
.box { box-sizing: border-box; width: 16px; height: 16px; margin-bottom: 2px; border: 2px solid #82828a; border-radius: 4px; }
.hour { margin-top: 19px; }
.slider-value { margin-top: 6px; margin-right: -6px; text-align: right; color: #ff2b4e; font: 14px/18px "Liberation Mono", monospace; }
.track { position: relative; margin-top: 5px; height: 4px; border-radius: 2px; background: #ff2b4b; }
.thumb { position: absolute; right: -6px; top: -4px; width: 12px; height: 12px; border-radius: 50%; background: #ff2b4b; }
.slider-range { margin-top: 12px; display: flex; justify-content: space-between; font: 14px/18px "Liberation Mono", monospace; -webkit-text-stroke: .3px #fafafa; }
.alert { margin-top: 17px; box-sizing: border-box; height: 80px; padding: 16px; border-radius: 4px; background: #294538; color: #dff8e5; display: flex; gap: 6px; line-height: 24px; }
.alert p { margin: -1px 0 0; white-space: nowrap; }
.download { margin-top: 16px; width: 157px; height: 36px; padding: 0 0 2px; border: 1px solid #50505a; border-radius: 4px; background: #292930; color: #fafafa; font: inherit; line-height: 20px; white-space: nowrap; }
.main { position: relative; flex: 1; min-width: 0; padding: 0 80px; }
.menu { position: absolute; right: 16px; top: 14px; stroke: #fafafa; stroke-width: 1.7; }
.metrics { display: grid; grid-template-columns: 381px 381px; height: 132px; }
.metric { padding-top: 44px; white-space: nowrap; }
.m-label { height: 22px; line-height: 22px; font-size: 12.3px; }
.m-value { height: 46px; line-height: 43px; font-size: 32.2px; font-weight: 400; -webkit-text-stroke: .3px #fafafa; }
.map { position: relative; width: 1300px; height: 500px; overflow: hidden; }
.tiles { display: block; }
.road { fill: none; stroke-width: 3.1; }
.pink { stroke: #e8779a; }
.peach { stroke: #faae9e; }
.creek { fill: none; stroke: #9fcbd9; stroke-width: 5; }
.border { fill: none; stroke: #c1aebf; stroke-width: 4; }
.river { fill: none; stroke: #ab9fbd; stroke-width: 4.5; }
.offshore { fill: none; stroke: #8ea9c2; stroke-width: 3; }
.maritime { fill: none; stroke: #8d87aa; stroke-width: 5; }
.maritime.slim { stroke-width: 3; }
.place { font: 31px "Noto Sans", sans-serif; fill: #333; stroke: #fff; stroke-opacity: .75; stroke-width: 6; paint-order: stroke; }
.place.big { font-size: 37px; }
.place.state { font-style: italic; fill: #7b5680; font-size: 30px; }
.place.lake { font-style: italic; fill: #4b78b2; stroke-opacity: .25; font-size: 33px; }
.zone { font: 39px "Liberation Sans", Arial, sans-serif; fill: #fff; stroke: #fff; stroke-width: 1.4; }
.scale { font: 36px "Liberation Sans", Arial, sans-serif; fill: #000; }
.sizes { font: 33px "Liberation Sans", Arial, sans-serif; fill: #fff; stroke: #fff; stroke-width: .9; }
.sizes .cap { font-size: 30px; }
.zoom { position: absolute; left: 10px; top: 10px; border: 2px solid rgba(0, 0, 0, .22); border-radius: 4px; background: #fff; background-clip: padding-box; width: 30px; height: 60px; }
.zoom span { display: flex; height: 30px; box-sizing: border-box; align-items: center; justify-content: center; padding-top: 5px; }
.zoom span + span { border-top: 1px solid #ccc; }
.zoom svg { stroke: #000; stroke-width: 2; }
.credit { position: absolute; right: 0; bottom: 0; height: 16px; padding: 0 5px; background: rgba(255, 255, 255, .7); color: #333; font: 11.05px/16px "Liberation Sans", Arial, sans-serif; }
.credit a { color: #0078a8; }
.bottom { display: grid; grid-template-columns: 759px 572px 1fr; padding-top: 37px; height: 247px; box-sizing: content-box; }
.chart { display: block; overflow: hidden; }
.chart text { fill: #fafafa; }
.title { font-size: 14.9px; }
.tick { font-size: 10.9px; }
.axis { font-size: 12.6px; }
.legend-title { font-size: 12.6px; }
.current { padding-top: 8px; }
.delta { display: flex; align-items: center; gap: 5px; height: 24px; padding-left: 2px; color: #e6003c; font-size: 14.4px; font-weight: 400; }
.delta svg { fill: none; stroke: #e6003c; stroke-width: 1.8; }
</style>
